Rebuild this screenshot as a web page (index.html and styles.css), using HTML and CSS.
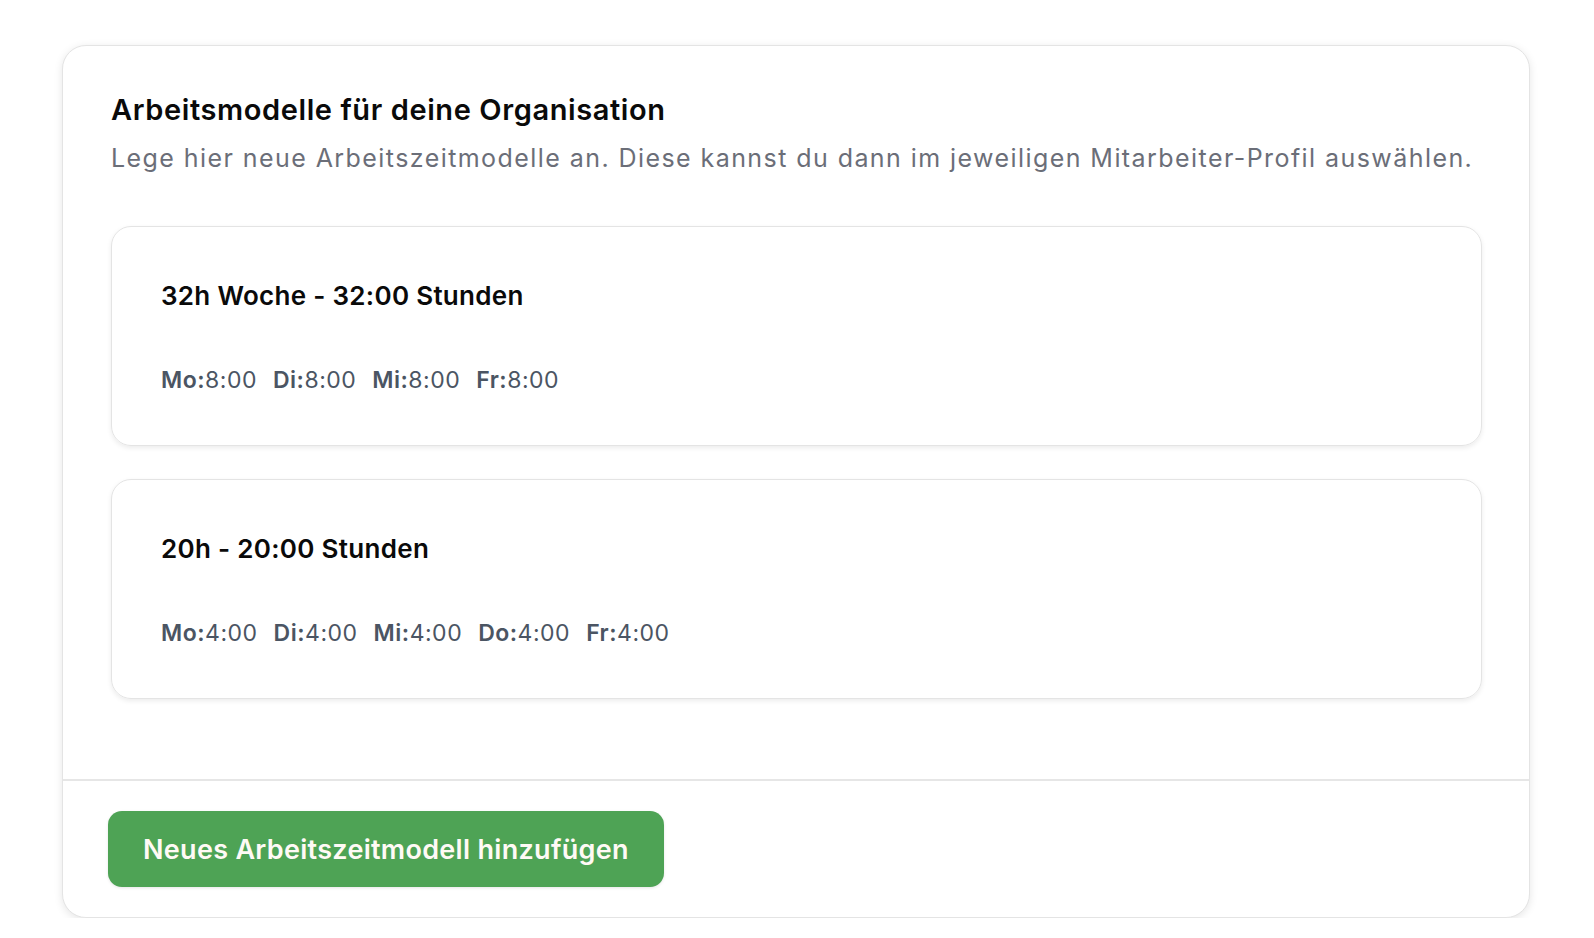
FILE: index.html
```html
<!DOCTYPE html>
<html lang="de">
<head>
    <meta charset="UTF-8">
    <meta name="viewport" content="width=device-width, initial-scale=1.0">
    <title>Arbeitsmodelle</title>
    <link rel="stylesheet" href="styles.css">
</head>
<body>
    <div class="panel">
        <div class="panel-body">
            <h2 class="panel-title">Arbeitsmodelle für deine Organisation</h2>
            <p class="panel-desc">Lege hier neue Arbeitszeitmodelle an. Diese kannst du dann im jeweiligen Mitarbeiter-Profil auswählen.</p>

            <div class="model-list">
                <div class="model-card">
                    <h3 class="model-name">32h Woche - 32:00 Stunden</h3>
                    <div class="model-days">
                        <span class="day"><b>Mo:</b>8:00</span>
                        <span class="day"><b>Di:</b>8:00</span>
                        <span class="day"><b>Mi:</b>8:00</span>
                        <span class="day"><b>Fr:</b>8:00</span>
                    </div>
                </div>
                <div class="model-card">
                    <h3 class="model-name">20h - 20:00 Stunden</h3>
                    <div class="model-days">
                        <span class="day"><b>Mo:</b>4:00</span>
                        <span class="day"><b>Di:</b>4:00</span>
                        <span class="day"><b>Mi:</b>4:00</span>
                        <span class="day"><b>Do:</b>4:00</span>
                        <span class="day"><b>Fr:</b>4:00</span>
                    </div>
                </div>
            </div>
        </div>
        <div class="panel-footer">
            <button class="add-btn">Neues Arbeitszeitmodell hinzufügen</button>
        </div>
    </div>
</body>
</html>
```

FILE: styles.css
```css
* {
    margin: 0;
    padding: 0;
    box-sizing: border-box;
}

body {
    font-family: Inter, "Noto Sans", sans-serif;
    background: #fff;
    color: #111;
    padding: 45px 0 0 62px;
}

.panel {
    width: 1468px;
    background: #fff;
    border: 1px solid #e4e4e4;
    border-radius: 24px;
    box-shadow: 0 2px 8px rgba(0,0,0,0.1);
}

.panel-body {
    padding: 44px 47px 80px 48px;
}

.panel-title {
    font-size: 29px;
    font-weight: 600;
    line-height: 40px;
    color: #0a0a0a;
    letter-spacing: 0.6px;
}

.panel-desc {
    font-size: 25px;
    line-height: 36px;
    color: #6b6e78;
    letter-spacing: 1.43px;
    margin-top: 10px;
}

.model-list {
    display: flex;
    flex-direction: column;
    gap: 33px;
    margin-top: 50px;
}

.model-card {
    border: 1px solid #e4e4e4;
    border-radius: 20px;
    box-shadow: 0 2px 5px rgba(0,0,0,0.08);
    padding: 52px 49px 49px;
}

.model-name {
    font-size: 26px;
    font-weight: 600;
    line-height: 34px;
    color: #0a0a0a;
    letter-spacing: 0.3px;
}

.model-days {
    display: flex;
    gap: 16px;
    margin-top: 51px;
    font-size: 23px;
    line-height: 32px;
    color: #4b5563;
    letter-spacing: 0.5px;
}

.day b {
    font-weight: 600;
}

.panel-footer {
    border-top: 2px solid #e6e6e6;
    padding: 30px 45px 30px;
}

.add-btn {
    font-family: inherit;
    font-size: 27px;
    font-weight: 600;
    letter-spacing: 0.3px;
    color: #fffaf5;
    background: #4ea355;
    border: none;
    border-radius: 14px;
    height: 76px;
    padding: 0 35px;
    box-shadow: 0 1px 3px rgba(0,0,0,0.1);
}
```
